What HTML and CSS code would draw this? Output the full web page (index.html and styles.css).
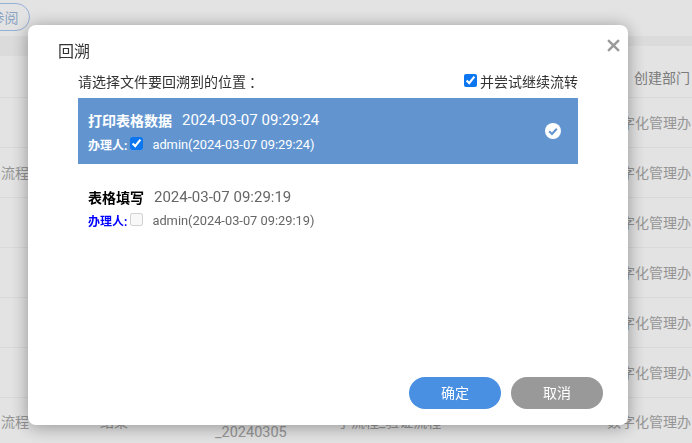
FILE: index.html
```html
<!DOCTYPE html>
<html lang="zh-CN">
<head>
<meta charset="utf-8">
<title>回溯</title>
<link rel="stylesheet" href="styles.css">
</head>
<body>
<div class="page">
  <div class="toolbar"><button class="pill">参阅</button></div>
  <div class="band"><div class="band-left"></div><div class="band-right"></div></div>
  <div class="row head"><span class="c1"></span><span class="c2"></span><span class="c3"></span><span class="c4"></span><span class="c5"></span><span class="c6">创建部门</span></div>
  <div class="row"><span class="c1"></span><span class="c2"></span><span class="c3"></span><span class="c4"></span><span class="c5"></span><span class="c6">数字化管理办</span></div>
  <div class="row"><span class="c1">流程</span><span class="c2"></span><span class="c3"></span><span class="c4"></span><span class="c5"></span><span class="c6">数字化管理办</span></div>
  <div class="row"><span class="c1"></span><span class="c2"></span><span class="c3"></span><span class="c4"></span><span class="c5"></span><span class="c6">数字化管理办</span></div>
  <div class="row"><span class="c1"></span><span class="c2"></span><span class="c3"></span><span class="c4"></span><span class="c5"></span><span class="c6">数字化管理办</span></div>
  <div class="row"><span class="c1"></span><span class="c2"></span><span class="c3"></span><span class="c4"></span><span class="c5"></span><span class="c6">数字化管理办</span></div>
  <div class="row"><span class="c1"></span><span class="c2"></span><span class="c3"></span><span class="c4"></span><span class="c5"></span><span class="c6">数字化管理办</span></div>
  <div class="row last"><span class="c1">流程</span><span class="c2">结束</span><span class="c3">_20240305</span><span class="c4">子流程_验证流程</span><span class="c5">admin</span><span class="c6">数字化管理办</span></div>
</div>

<div class="overlay">
  <div class="dialog">
    <svg class="close" viewBox="0 0 12 12" aria-label="关闭"><path d="M1 1 11 11M11 1 1 11"/></svg>
    <h2 class="title">回溯</h2>
    <div class="intro">
      <span>请选择文件要回溯到的位置<span class="colon">：</span></span>
      <label class="continue"><input type="checkbox" class="check" checked>并尝试继续流转</label>
    </div>
    <div class="item selected">
      <div class="item-head"><strong class="item-name">打印表格数据</strong><span class="item-date">2024-03-07 09:29:24</span></div>
      <div class="item-meta"><b class="handler">办理人:</b><input type="checkbox" class="check small" checked><span class="who">admin(2024-03-07 09:29:24)</span></div>
      <svg class="tick" viewBox="0 0 16 16"><circle cx="8" cy="8" r="8" fill="#fff"/><path d="M4.2 8.2 7 11l4.8-5.2" fill="none" stroke="#6295d0" stroke-width="2"/></svg>
    </div>
    <div class="item">
      <div class="item-head"><strong class="item-name">表格填写</strong><span class="item-date">2024-03-07 09:29:19</span></div>
      <div class="item-meta"><b class="handler">办理人:</b><input type="checkbox" class="check small" disabled><span class="who">admin(2024-03-07 09:29:19)</span></div>
    </div>
    <div class="actions">
      <button class="btn ok">确定</button>
      <button class="btn cancel">取消</button>
    </div>
  </div>
</div>
</body>
</html>
```

FILE: styles.css
```css
* { box-sizing: border-box; }
html, body { margin: 0; height: 100%; overflow: hidden; }
body { font-family: Roboto, "Noto Sans CJK SC", sans-serif; background: #fff; color: #666; }

.page { width: 692px; height: 443px; overflow: hidden; font-size: 14px; }
.toolbar { height: 36px; padding: 3px 0 0; }
.pill { display: block; width: 54px; height: 28px; margin-left: -24px; padding: 0 0 0 3px; border: 1px solid #a6c6f2; border-radius: 14px; background: #fff; color: #9cb8dc; font: 14px "Noto Sans CJK SC", sans-serif; }
.band { display: flex; align-items: flex-start; height: 20px; }
.band-left { flex: 1; height: 20px; background: #f7f7f7; }
.band-right { flex: 1; height: 10px; background: #f7f7f7; }
.row { display: grid; grid-template-columns: 100px 115px 122px 168px 102px 85px; height: 50px; padding-bottom: 2px; border-top: 1px solid #f4f4f4; align-items: center; color: #a8a8a8; white-space: nowrap; }
.row.head { height: 41px; padding-bottom: 0; border-top: 0; color: #8c8c8c; }
.row.head .c6 { padding-left: 27px; }
.row span { display: block; }
.c1 { text-align: right; padding-right: 71px; }
.c3 { position: relative; top: 13px; font-size: 14.5px; }
.row.last { align-items: start; padding: 13px 0 0; }

.overlay { position: fixed; inset: 0; background: rgba(0,0,0,.11); }
.dialog { position: absolute; left: 28px; top: 25px; width: 600px; height: 400px; padding: 15px 50px 0; background: #fff; border-radius: 8px; box-shadow: 0 2px 18px rgba(0,0,0,.36); color: #333; }
.close { position: absolute; right: 8px; top: 14px; width: 13px; height: 13px; }
.close path { fill: none; stroke: #999; stroke-width: 2.2; }
.title { margin: 0 0 0 -20px; font-size: 16px; font-weight: 400; line-height: 24px; color: #333; }
.intro { display: flex; justify-content: space-between; align-items: center; height: 22px; margin-top: 6px; font-size: 14px; }
.colon { position: relative; left: 3px; font-family: "Noto Sans CJK TC", sans-serif; }
.continue { display: flex; align-items: center; }
.check { position: relative; top: -1px; width: 13px; height: 13px; margin: 0 3px 0 0; accent-color: #0b76f0; }
.item { position: relative; height: 66px; margin-top: 6px; padding: 10px 10px 0; color: #666; }
.item + .item { margin-top: 0; padding-top: 21px; height: 76px; }
.item + .item .item-meta { margin-top: 1px; }
.selected { background: #6295d0; color: #fff; }
.item-head { display: flex; align-items: center; height: 24px; }
.item-name { font-size: 14px; color: #000; }
.selected .item-name { color: #fff; }
.item-date { margin-left: 10px; font-size: 15px; }
.item-meta { display: flex; align-items: center; height: 20px; margin-top: 2px; font-size: 12.85px; }
.handler { font-size: 12px; color: #00f; }
.selected .handler { color: #fff; }
.check.small { margin: 0 0 0 3px; }
.who { margin-left: 9px; }
.tick { position: absolute; right: 17px; top: 25px; width: 16px; height: 16px; }
.actions { position: absolute; right: 25px; bottom: 16px; display: flex; gap: 10px; }
.btn { width: 92px; height: 32px; padding: 0 0 2px; border: 0; border-radius: 16px; color: #fff; font: 14px "Noto Sans CJK SC", sans-serif; }
.ok { background: #4a90e2; }
.cancel { background: #999; }
```
